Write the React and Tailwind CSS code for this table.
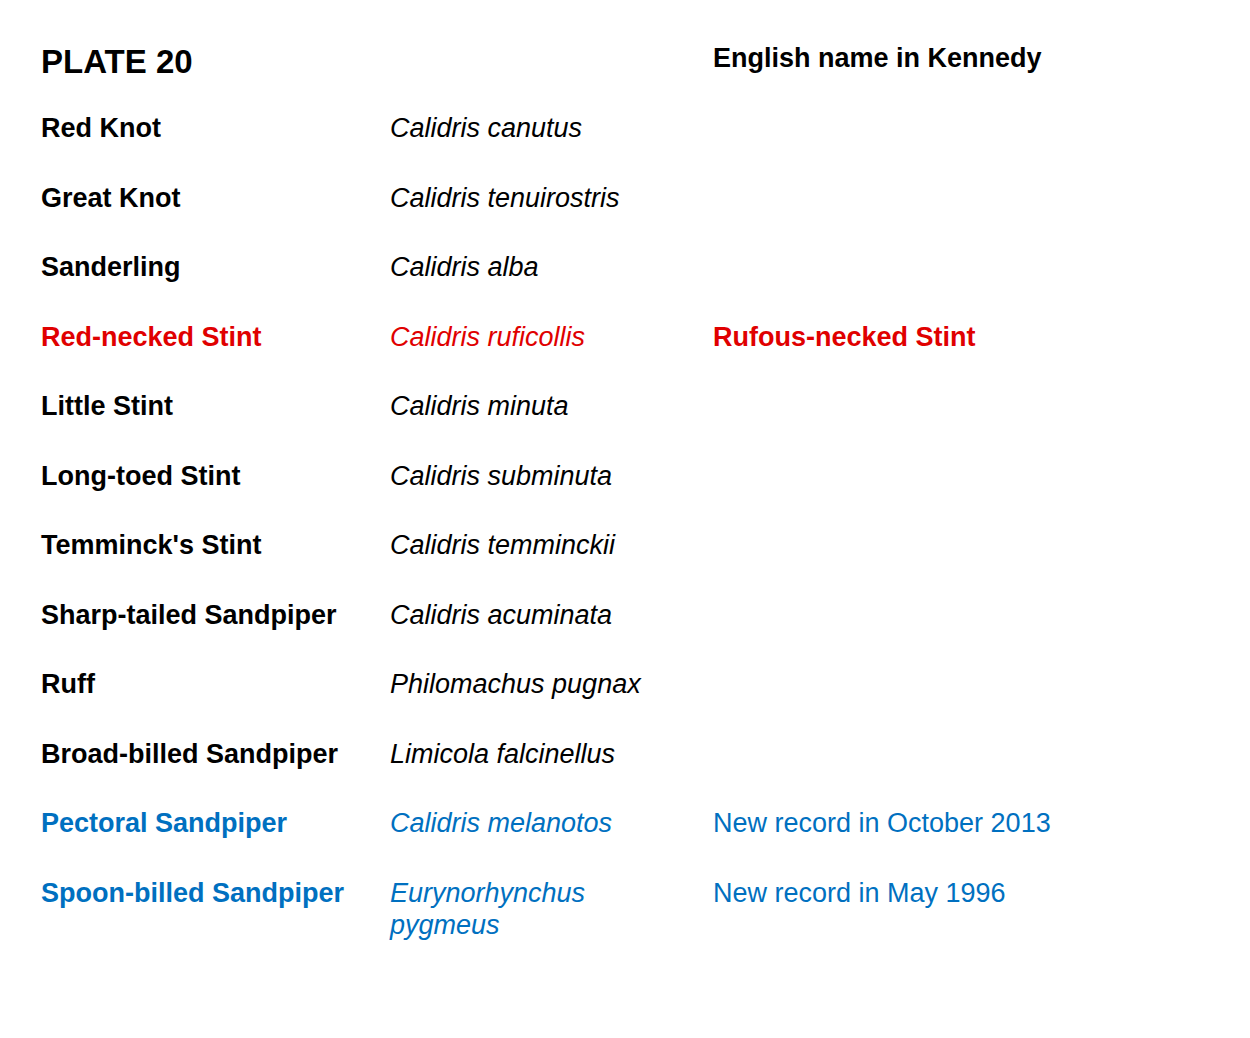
import React from 'react';

const BLACK = 'text-black';
const RED = 'text-[#e00000]';
const BLUE = 'text-[#0070c0]';

const birds = [
  { name: 'Red Knot', latin: 'Calidris canutus', color: BLACK },
  { name: 'Great Knot', latin: 'Calidris tenuirostris', color: BLACK },
  { name: 'Sanderling', latin: 'Calidris alba', color: BLACK },
  { name: 'Red-necked Stint', latin: 'Calidris ruficollis', note: 'Rufous-necked Stint', noteBold: true, color: RED },
  { name: 'Little Stint', latin: 'Calidris minuta', color: BLACK },
  { name: 'Long-toed Stint', latin: 'Calidris subminuta', color: BLACK },
  { name: "Temminck's Stint", latin: 'Calidris temminckii', color: BLACK },
  { name: 'Sharp-tailed Sandpiper', latin: 'Calidris acuminata', color: BLACK },
  { name: 'Ruff', latin: 'Philomachus pugnax', color: BLACK },
  { name: 'Broad-billed Sandpiper', latin: 'Limicola falcinellus', color: BLACK },
  { name: 'Pectoral Sandpiper', latin: 'Calidris melanotos', note: 'New record in October 2013', color: BLUE },
  { name: 'Spoon-billed Sandpiper', latin: 'Eurynorhynchus pygmeus', note: 'New record in May 1996', color: BLUE },
];

export default function App() {
  return (
    <div className="min-h-[1038px] w-[1250px] bg-white pl-[41px] pt-[42px] font-['Liberation_Sans',Arial,sans-serif] text-[27px] leading-[32px] text-black">
      {/* heading row */}
      <div className="flex h-[70px]">
        <div className="w-[672px] text-[33px] leading-[40px] font-bold">PLATE 20</div>
        <div className="font-bold">English name in Kennedy</div>
      </div>

      {birds.map((b) => (
        <div key={b.name} className={`flex min-h-[69.5px] ${b.color}`}>
          <div className="w-[349px] font-bold">{b.name}</div>
          <div className="w-[323px] pr-[40px] italic">{b.latin}</div>
          <div className={b.noteBold ? 'font-bold' : ''}>{b.note}</div>
        </div>
      ))}
    </div>
  );
}
